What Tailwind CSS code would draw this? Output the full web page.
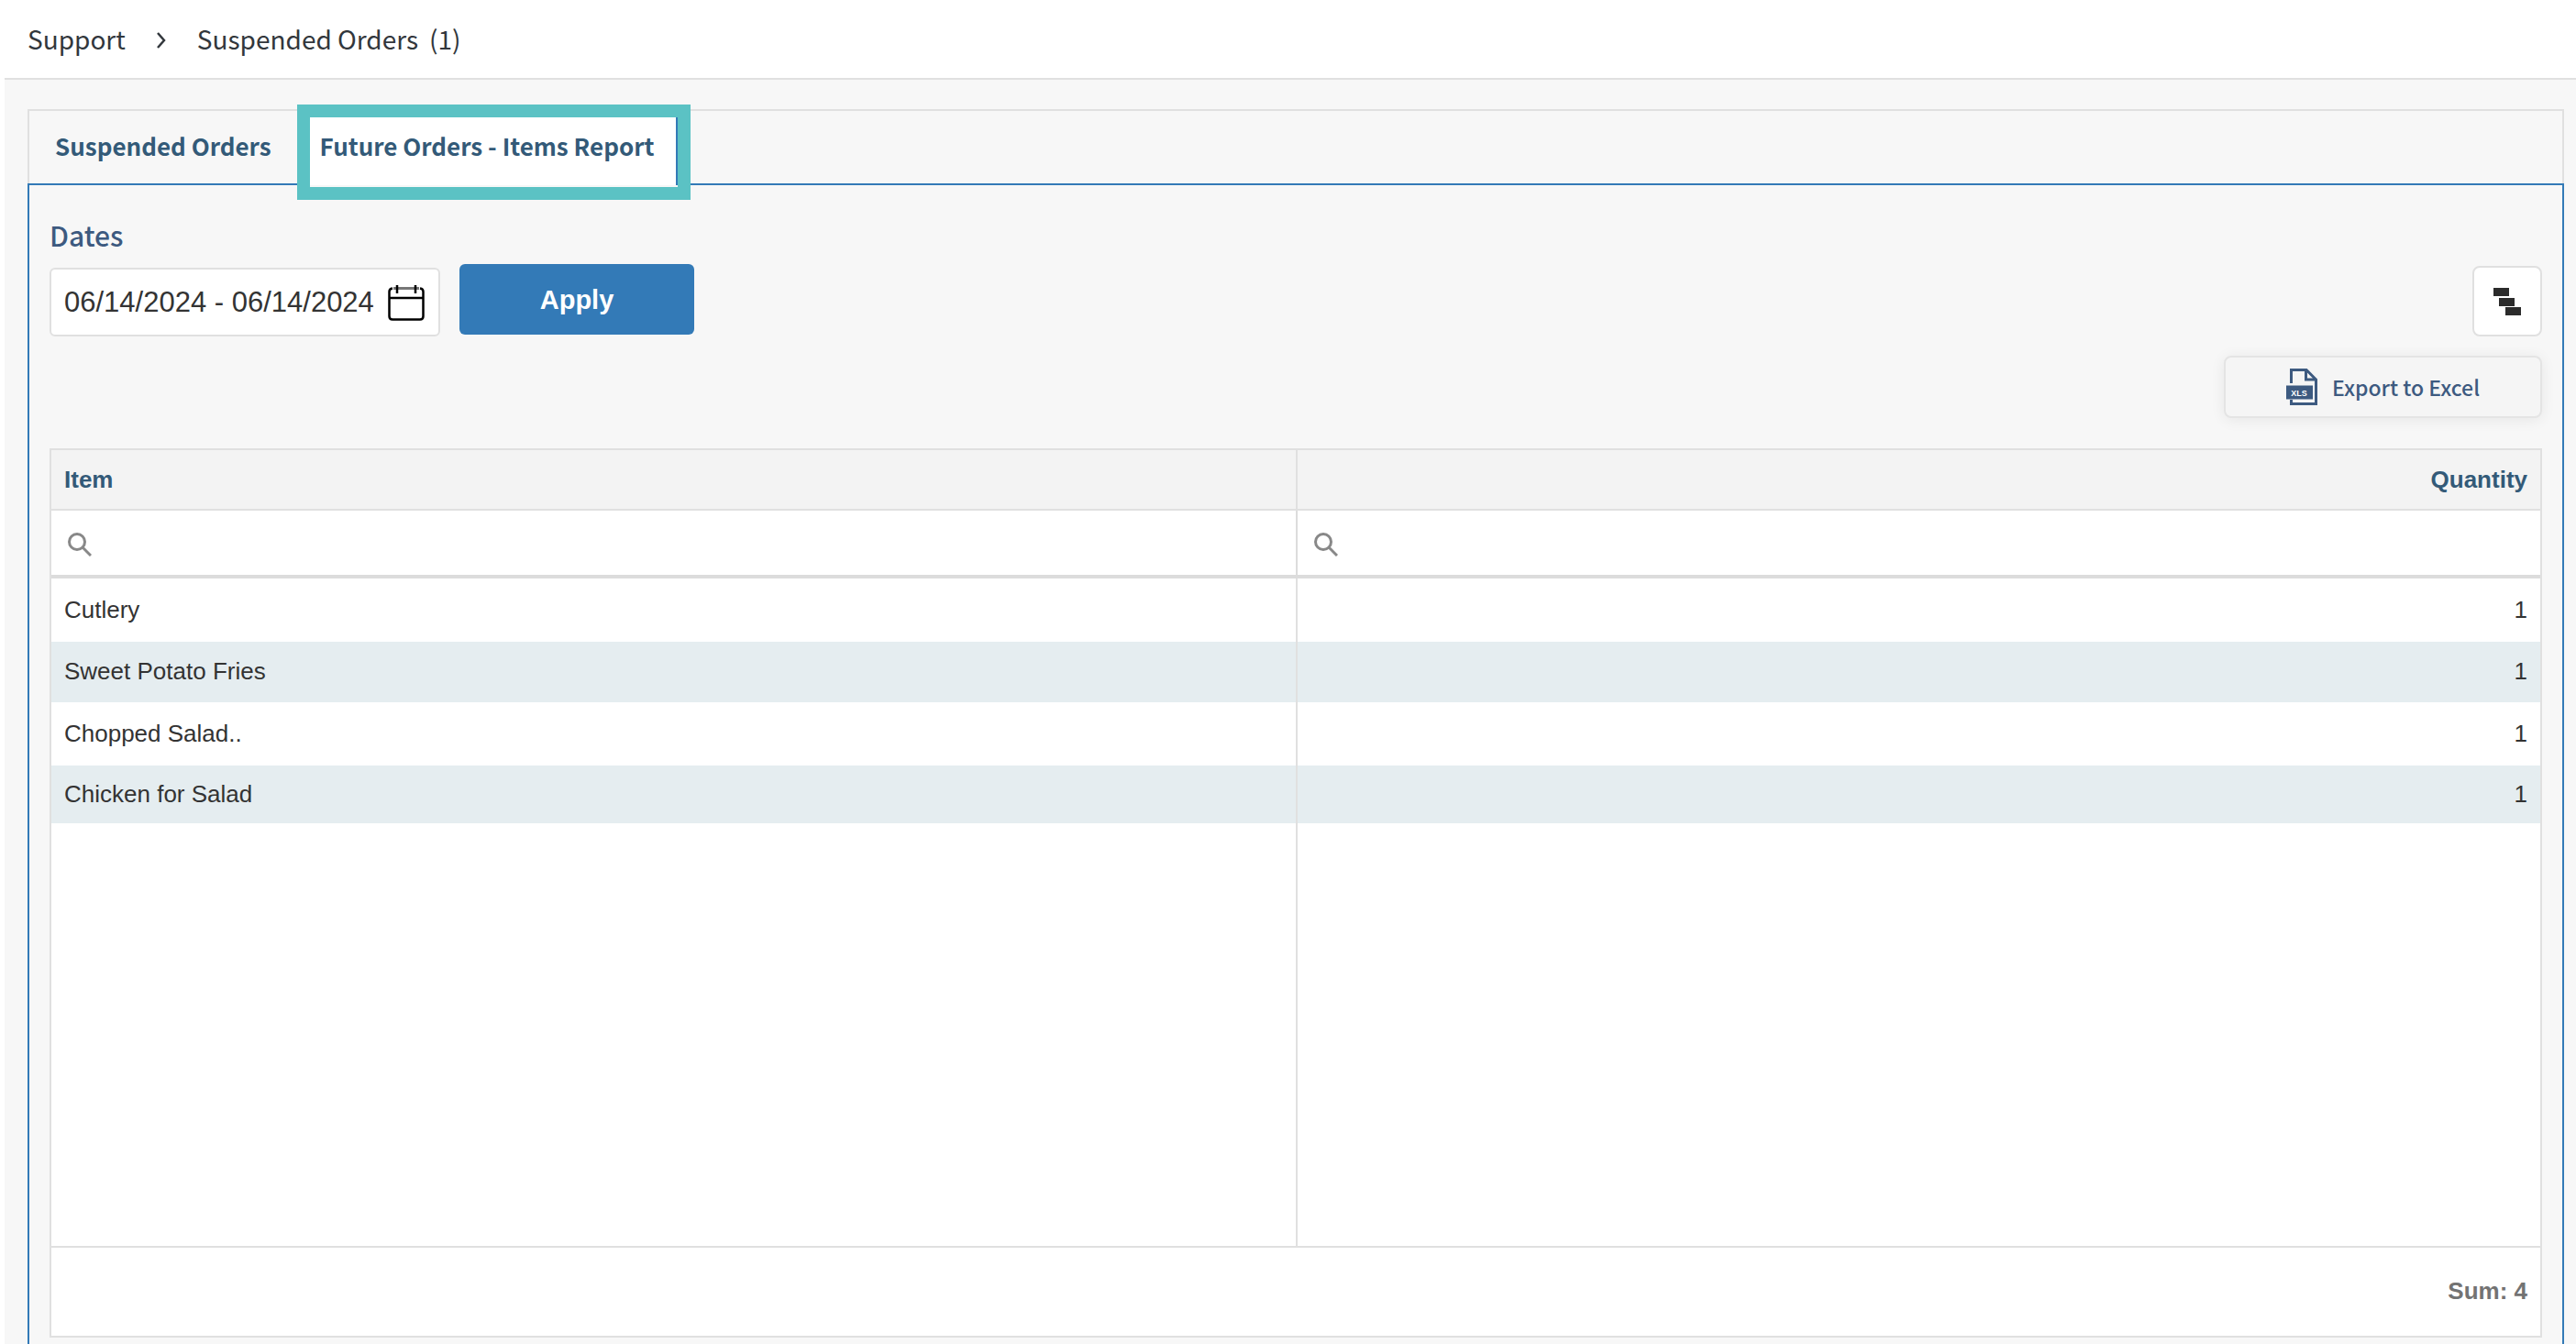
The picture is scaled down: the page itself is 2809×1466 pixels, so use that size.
<!DOCTYPE html>
<html lang="en">
<head>
<meta charset="utf-8">
<meta name="viewport" content="width=device-width, initial-scale=1">
<title>Suspended Orders</title>
<script src="https://cdn.jsdelivr.net/npm/@tailwindcss/browser@4"></script>
</head>
<body class="flex min-h-screen flex-col bg-white font-['Liberation_Sans',Arial,sans-serif] text-[26px] leading-8 text-[#333]">
  <header class="ml-[5px] flex h-[87px] items-center border-b-2 border-[#e0e0e0] pb-[2px] pl-[25px] font-['Noto_Sans_CJK_SC','Noto_Sans',sans-serif] text-[28px] text-[#32373c]">
    <nav aria-label="Breadcrumb" class="flex items-center">
      <a href="#">Support</a>
      <svg class="mx-[33px] mt-1 h-[18px] w-3" viewBox="0 0 12 18" fill="none" stroke="#32373c" stroke-width="2.500" aria-hidden="true"><path d="M2 1l7 8-7 8"/></svg>
      <a href="#">Suspended Orders</a>
      <span class="ml-3">(1)</span>
    </nav>
  </header>

  <main class="ml-[5px] flex grow flex-col bg-[#f7f7f7] pt-8 pr-[13px] pl-[25px]">
    <div role="tablist" class="flex h-[81px] border-2 border-b-0 border-[#e0e0e0] font-['Noto_Sans_CJK_SC','Noto_Sans',sans-serif] text-[26px] font-bold text-[#335a78]">
      <button type="button" role="tab" aria-selected="false" class="px-7 pb-1">Suspended Orders</button>
      <div class="relative -mb-[2px] flex">
        <button type="button" role="tab" aria-selected="true" class="border-x-2 border-[#337ab7] bg-white pr-6 pb-[6px] pl-[23px]">Future Orders - Items Report</button>
        <span class="pointer-events-none absolute -top-[7px] -right-[14px] -bottom-4 left-0 border-[14px] border-[#5bc2c4]"></span>
      </div>
    </div>

    <section role="tabpanel" class="flex grow flex-col border-2 border-b-0 border-[#337ab7] px-[22px] pt-[34px] pb-[7px]">
      <label for="dates" class="font-['Noto_Sans_CJK_SC','Noto_Sans',sans-serif] text-[30px] leading-10 font-medium text-[#3d5a80]">Dates</label>
      <div class="mt-[10px] flex items-start">
        <div class="mt-[6px] flex h-[75px] w-[426px] items-center rounded-md border-2 border-[#e0e0e0] bg-white pr-[15px] pl-[14px]">
          <input id="dates" type="text" value="06/14/2024 - 06/14/2024" class="min-w-0 grow text-[31px] leading-9 outline-none">
          <svg class="h-10 w-10 shrink-0" viewBox="0 0 40 40" fill="none" stroke="#000" stroke-width="2.500" aria-hidden="true"><path d="M6 4.500h28" stroke="#777" stroke-width="3"/><path d="M5 4.500Q1.500 5 1.500 8V35Q1.500 38.500 5 38.500H35Q38.500 38.500 38.500 35V8Q38.500 5 35 4.500M1.500 15h37M10 1v9M30 1v9"/></svg>
        </div>
        <button type="button" class="mt-[2px] ml-[21px] h-[77px] w-64 rounded-md bg-[#337ab7] text-[29px] font-bold text-white">Apply</button>
        <button type="button" aria-label="Columns" class="mt-1 ml-auto flex h-[77px] w-[76px] items-center justify-center rounded-lg border-2 border-[#e0e0e0] bg-white">
          <svg class="h-[30px] w-[30px]" viewBox="0 0 30 30" fill="#2b2b2b" aria-hidden="true"><path d="M0 0h17v9H0zM6 11h17v9H6zM13 21h17v9H13z"/></svg>
        </button>
      </div>

      <button type="button" class="mt-[21px] ml-auto flex h-[68px] w-[347px] items-center justify-center rounded-lg border-2 border-[#e4e4e4] bg-[#f5f5f5] font-['Noto_Sans_CJK_SC','Noto_Sans',sans-serif] text-[23px] font-medium text-[#3d5a80] shadow-[0_2px_16px_rgba(0,0,0,0.07)]">
        <svg class="mr-4 h-10 w-[34px]" viewBox="0 0 34 40" aria-hidden="true"><path d="M5.500 16V1.500H22L32.500 12V38.500H5.500V34M21.500 2V12H32" fill="none" stroke="#3d5a80" stroke-width="3"/><path d="M0 18.500h29v15H0z" fill="#3d5a80"/><text x="14" y="29.500" text-anchor="middle" font-family="Liberation Sans, sans-serif" font-size="9" font-weight="bold" fill="#fff">XLS</text></svg>
        Export to Excel
      </button>

      <div class="mt-[33px] border-2 border-[#e0e0e0] bg-white">
        <table class="w-full table-fixed border-separate border-spacing-0">
          <thead>
            <tr class="h-[66px] bg-[#f3f3f3] text-[#335a78]">
              <th scope="col" class="border-b-2 border-[#e0e0e0] px-[14px] text-left">Item</th>
              <th scope="col" class="border-b-2 border-l-2 border-[#e0e0e0] px-[14px] text-right">Quantity</th>
            </tr>
            <tr class="h-[74px]">
              <td class="border-b-4 border-[#dcdcdc] px-[18px] pt-1">
                <label class="flex items-center gap-3">
                  <svg class="h-[26px] w-[26px] shrink-0" viewBox="0 0 26 26" fill="none" stroke="#888" stroke-width="3" aria-hidden="true"><circle cx="10" cy="10" r="8.500"/><path d="M16 16l9 9"/></svg>
                  <input type="text" aria-label="Filter by item" class="min-w-0 grow outline-none">
                </label>
              </td>
              <td class="border-b-4 border-l-2 border-[#dcdcdc] px-[18px] pt-1">
                <label class="flex items-center gap-3">
                  <svg class="h-[26px] w-[26px] shrink-0" viewBox="0 0 26 26" fill="none" stroke="#888" stroke-width="3" aria-hidden="true"><circle cx="10" cy="10" r="8.500"/><path d="M16 16l9 9"/></svg>
                  <input type="text" aria-label="Filter by quantity" class="min-w-0 grow outline-none">
                </label>
              </td>
            </tr>
          </thead>
          <tbody>
            <tr class="h-[69px]"><td class="px-[14px] pb-[2px]">Cutlery</td><td class="border-l-2 border-[#e0e0e0] px-[14px] pb-[2px] text-right">1</td></tr>
            <tr class="h-[66px] bg-[#e5edf0]"><td class="px-[14px] pb-[2px]">Sweet Potato Fries</td><td class="border-l-2 border-[#e0e0e0] px-[14px] pb-[2px] text-right">1</td></tr>
            <tr class="h-[69px]"><td class="px-[14px] pb-[2px]">Chopped Salad..</td><td class="border-l-2 border-[#e0e0e0] px-[14px] pb-[2px] text-right">1</td></tr>
            <tr class="h-[63px] bg-[#e5edf0]"><td class="px-[14px] pb-[2px]">Chicken for Salad</td><td class="border-l-2 border-[#e0e0e0] px-[14px] pb-[2px] text-right">1</td></tr>
            <tr class="h-[461px]" aria-hidden="true"><td></td><td class="border-l-2 border-[#e0e0e0]"></td></tr>
          </tbody>
          <tfoot>
            <tr class="h-[98px]"><td colspan="2" class="border-t-2 border-[#e0e0e0] px-[14px] pb-[2px] text-right font-bold text-[#737373]">Sum: 4</td></tr>
          </tfoot>
        </table>
      </div>
    </section>
  </main>
</body>
</html>
